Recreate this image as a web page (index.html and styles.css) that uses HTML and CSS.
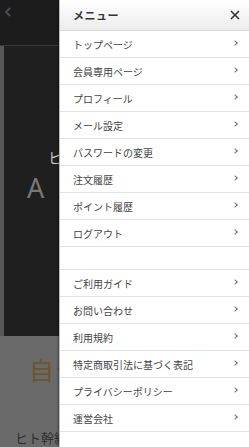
FILE: index.html
```html
<!DOCTYPE html>
<html lang="ja">
<head>
<meta charset="utf-8">
<link rel="stylesheet" href="styles.css">
</head>
<body>
<div class="page">
  <header class="topbar">
    <svg class="back" width="8" height="10" viewBox="0 0 8 10"><path d="M6 1 L2 5 L6 9" fill="none" stroke="#4b4b57" stroke-width="2"/></svg>
  </header>
  <section class="hero-wrap">
    <div class="hero">
      <div class="hero-small">ヒ</div>
      <div class="hero-big">A</div>
    </div>
  </section>
  <section class="content">
    <div class="title">自分</div>
    <div class="sub">ヒト幹細胞</div>
  </section>
</div>

<nav class="drawer">
  <div class="drawer-head">
    <span class="drawer-title">メニュー</span>
    <svg class="close" width="10" height="10" viewBox="0 0 10 10"><path d="M1 1 L9 9 M9 1 L1 9" stroke="#333" stroke-width="1.6" fill="none"/></svg>
  </div>
  <ul class="menu">
    <li class="item"><span>トップページ</span><i class="chev"></i></li>
    <li class="item"><span>会員専用ページ</span><i class="chev"></i></li>
    <li class="item"><span>プロフィール</span><i class="chev"></i></li>
    <li class="item"><span>メール設定</span><i class="chev"></i></li>
    <li class="item"><span>パスワードの変更</span><i class="chev"></i></li>
    <li class="item"><span>注文履歴</span><i class="chev"></i></li>
    <li class="item"><span>ポイント履歴</span><i class="chev"></i></li>
    <li class="item"><span>ログアウト</span><i class="chev"></i></li>
    <li class="spacer"></li>
    <li class="item"><span>ご利用ガイド</span><i class="chev"></i></li>
    <li class="item"><span>お問い合わせ</span><i class="chev"></i></li>
    <li class="item"><span>利用規約</span><i class="chev"></i></li>
    <li class="item"><span>特定商取引法に基づく表記</span><i class="chev"></i></li>
    <li class="item"><span>プライバシーポリシー</span><i class="chev"></i></li>
    <li class="item"><span>運営会社</span><i class="chev"></i></li>
  </ul>
</nav>
</body>
</html>
```

FILE: styles.css
```css
html, body {
  margin: 0;
  padding: 0;
  height: 100%;
  overflow: hidden;
}
body {
  font-family: "Noto Sans CJK JP", "Noto Sans", sans-serif;
  background: #6a6a6a;
}
.page {
  display: flex;
  flex-direction: column;
  width: 249px;
}
.topbar {
  height: 46px;
  background: #1c1c1c;
  border-bottom: 1px solid #3a3a3a;
  box-sizing: border-box;
  padding: 7px 0 0 4px;
}
.back { display: block; }
.hero-wrap {
  background: #575757;
  padding-left: 4px;
}
.hero {
  height: 290px;
  background: #1f1f1f;
  padding: 101px 0 0 23px;
  box-sizing: border-box;
}
.hero-small {
  margin-left: 21px;
  font-size: 14px;
  line-height: 20px;
  color: #c8c8c8;
}
.hero-big {
  margin-top: 6px;
  font-family: "Noto Sans", sans-serif;
  font-size: 27px;
  line-height: 30px;
  color: #777;
}
.content {
  padding: 16px 0 0 15px;
}
.title {
  margin-left: 14px;
  font-size: 25px;
  line-height: 34px;
  color: #6e552e;
  letter-spacing: 3px;
}
.sub {
  margin-top: 43px;
  font-size: 13px;
  line-height: 18px;
  color: #2f2f2f;
}

.drawer {
  position: absolute;
  top: 0;
  left: 59px;
  width: 190px;
  height: 447px;
  background: #fff;
  box-shadow: -1px 0 2px rgba(0,0,0,0.35);
  border-left: 1px solid #bbb;
  box-sizing: border-box;
}
.drawer-head {
  height: 31px;
  display: flex;
  align-items: center;
  justify-content: space-between;
  padding: 0 9px 0 13px;
  background: linear-gradient(#ffffff, #ececec);
  border-bottom: 1px solid #dcdcdc;
  box-sizing: border-box;
}
.drawer-title {
  font-size: 11px;
  font-weight: bold;
  color: #333;
  letter-spacing: 0.5px;
}
.close { display: block; }
.menu {
  list-style: none;
  margin: 0;
  padding: 0;
}
.item {
  height: 27px;
  display: flex;
  align-items: center;
  justify-content: space-between;
  padding: 0 12px 0 13px;
  border-bottom: 1.5px solid #e2e2e2;
  box-sizing: border-box;
  font-size: 10px;
  color: #444;
}
.spacer {
  height: 23px;
  border-bottom: 1.5px solid #e2e2e2;
  box-sizing: border-box;
}
.chev {
  width: 3px;
  height: 3px;
  border-top: 1.2px solid #6a7080;
  border-right: 1.2px solid #6a7080;
  transform: rotate(45deg);
  margin-top: -2px;
}
```
